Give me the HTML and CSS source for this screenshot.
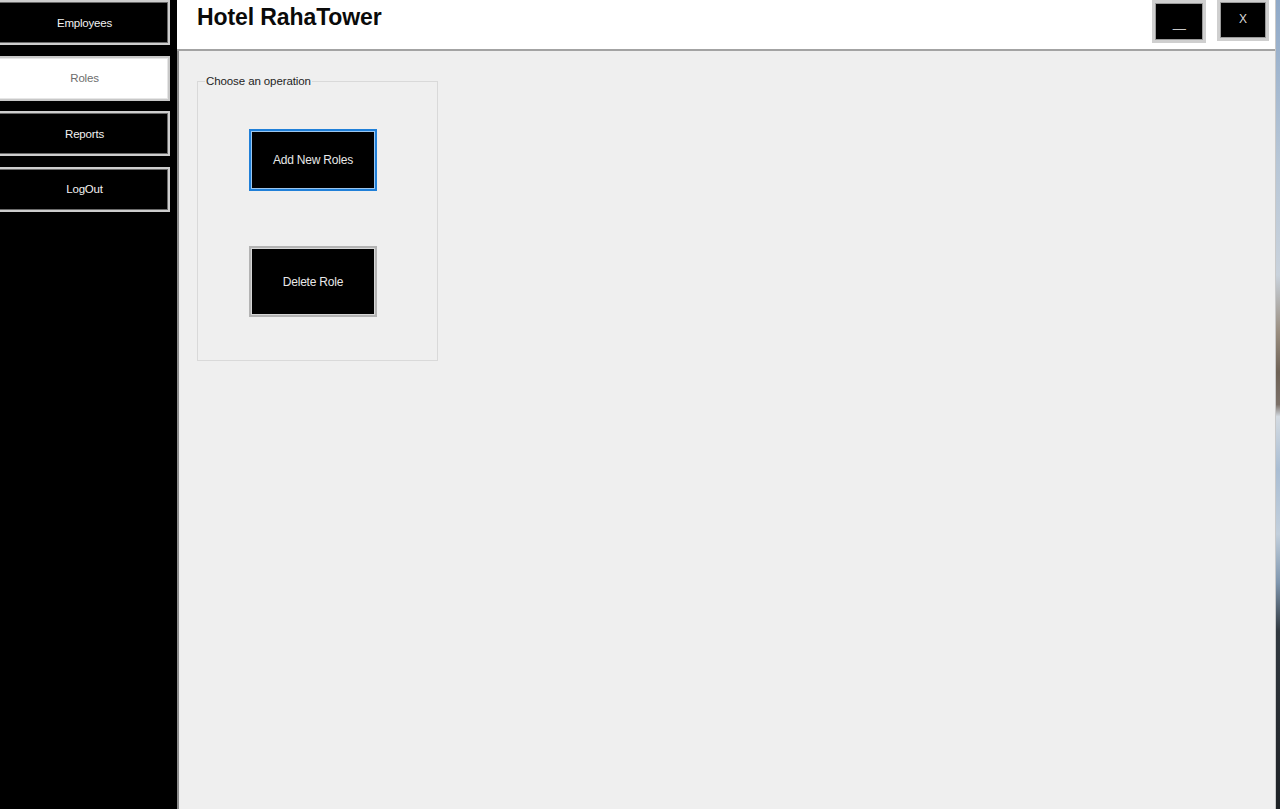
FILE: index.html
```html
<!DOCTYPE html>
<html>
<head>
<meta charset="utf-8">
<title>Hotel RahaTower</title>
<link rel="stylesheet" href="styles.css">
</head>
<body>
<div class="screen">
  <div class="window">
    <aside class="sidebar">
      <button class="nav-btn">Employees</button>
      <button class="nav-btn active">Roles</button>
      <button class="nav-btn">Reports</button>
      <button class="nav-btn">LogOut</button>
    </aside>
    <main class="main">
      <header class="header">
        <h1 class="title">Hotel RahaTower</h1>
        <div class="win-controls">
          <button class="win-btn min"><span class="min-glyph">_</span></button>
          <button class="win-btn close">X</button>
        </div>
      </header>
      <section class="content">
        <fieldset class="group">
          <legend class="group-title">Choose an operation</legend>
          <div class="ops">
            <button class="op-btn focused">Add New Roles</button>
            <button class="op-btn tall">Delete Role</button>
          </div>
        </fieldset>
      </section>
    </main>
  </div>
  <div class="desktop"></div>
</div>
</body>
</html>
```

FILE: styles.css
```css
* { box-sizing: border-box; }
html, body {
  margin: 0;
  padding: 0;
  width: 1280px;
  height: 809px;
  overflow: hidden;
  font-family: "Liberation Sans", Arial, sans-serif;
}
.screen {
  display: flex;
  width: 1280px;
  height: 809px;
}
.window {
  display: flex;
  width: 1276px;
  height: 809px;
  border-right: 1px solid #c9c9c9;
}
.sidebar {
  width: 177px;
  flex: none;
  background: #000;
  display: flex;
  flex-direction: column;
  gap: 10.5px;
  padding-top: 0;
}
.nav-btn {
  margin-left: -3px;
  width: 173px;
  height: 45px;
  background: #000;
  color: #f2f2f2;
  border: 2px solid #cdcdcd;
  box-shadow: inset 0 0 0 1px #6a6a6a;
  font-family: "Liberation Sans", Arial, sans-serif;
  font-size: 11.5px;
  letter-spacing: -0.2px;
  padding: 0 0 0 2px;
  text-align: center;
  cursor: pointer;
}
.nav-btn.active {
  background: #fff;
  color: #6d6d6d;
  border-color: #c8c8c8;
  box-shadow: inset 0 0 0 1px #e6e6e6;
}
.main {
  flex: 1;
  display: flex;
  flex-direction: column;
  min-width: 0;
}
.header {
  height: 51px;
  flex: none;
  background: #fff;
  border-bottom: 2px solid #a3a3a3;
  display: flex;
  justify-content: space-between;
  align-items: flex-start;
  padding: 0 6px 0 20px;
}
.title {
  margin: 0;
  padding-top: 4px;
  font-size: 23px;
  font-weight: bold;
  color: #0a0a0a;
  letter-spacing: -0.1px;
}
.win-controls {
  display: flex;
  gap: 11px;
  align-items: flex-start;
}
.win-btn {
  background: #000;
  color: #d8d8d8;
  border: 3px solid #cfcfcf;
  box-shadow: inset 0 0 0 1px #9a9a9a;
  font-family: "Liberation Sans", Arial, sans-serif;
  font-size: 12px;
  padding: 0;
  cursor: pointer;
}
.win-btn.min {
  width: 54px;
  height: 43px;
  padding-top: 3px;
}
.min-glyph {
  display: inline-block;
  transform: scaleX(1.9);
  color: #c8c8c8;
}
.win-btn.close {
  width: 52px;
  height: 42px;
  margin-top: -1px;
  padding-bottom: 2px;
}
.content {
  flex: 1;
  background: #efefef;
  border-left: 2px solid #8c8c8c;
  padding: 24px 0 0 18px;
}
.group {
  margin: 0;
  width: 241px;
  height: 286px;
  border: 1px solid #d9d9d9;
  padding: 0;
}
.group-title {
  margin-left: 7px;
  padding: 0 1px;
  font-size: 11.5px;
  line-height: 13px;
  letter-spacing: -0.1px;
  color: #1e1e1e;
}
.ops {
  display: flex;
  flex-direction: column;
  align-items: flex-start;
  gap: 55px;
  padding: 41px 0 0 51px;
}
.op-btn {
  width: 128px;
  height: 62px;
  background: #000;
  color: #e8e8e8;
  border: 2px solid #b3b3b3;
  box-shadow: inset 0 0 0 1px #d6d6d6;
  font-family: "Liberation Sans", Arial, sans-serif;
  font-size: 12px;
  letter-spacing: -0.2px;
  padding: 0;
  cursor: pointer;
}
.op-btn.focused {
  border-color: #1f7fd8;
  box-shadow: inset 0 0 0 1px #9cc6ee;
}
.op-btn.tall {
  height: 71px;
}
.desktop {
  flex: 1;
  background: linear-gradient(to bottom,
    #8fa9c8 0%, #b7c6d6 20%, #c9d2dc 34%, #9a8e80 41%, #6e6256 46%,
    #7b7068 50%, #d4dbe2 51.5%, #a9bdd3 58%, #c2cfdc 66%, #7f96ae 72%,
    #30383f 78%, #262b30 90%, #1d2125 100%);
}
```
